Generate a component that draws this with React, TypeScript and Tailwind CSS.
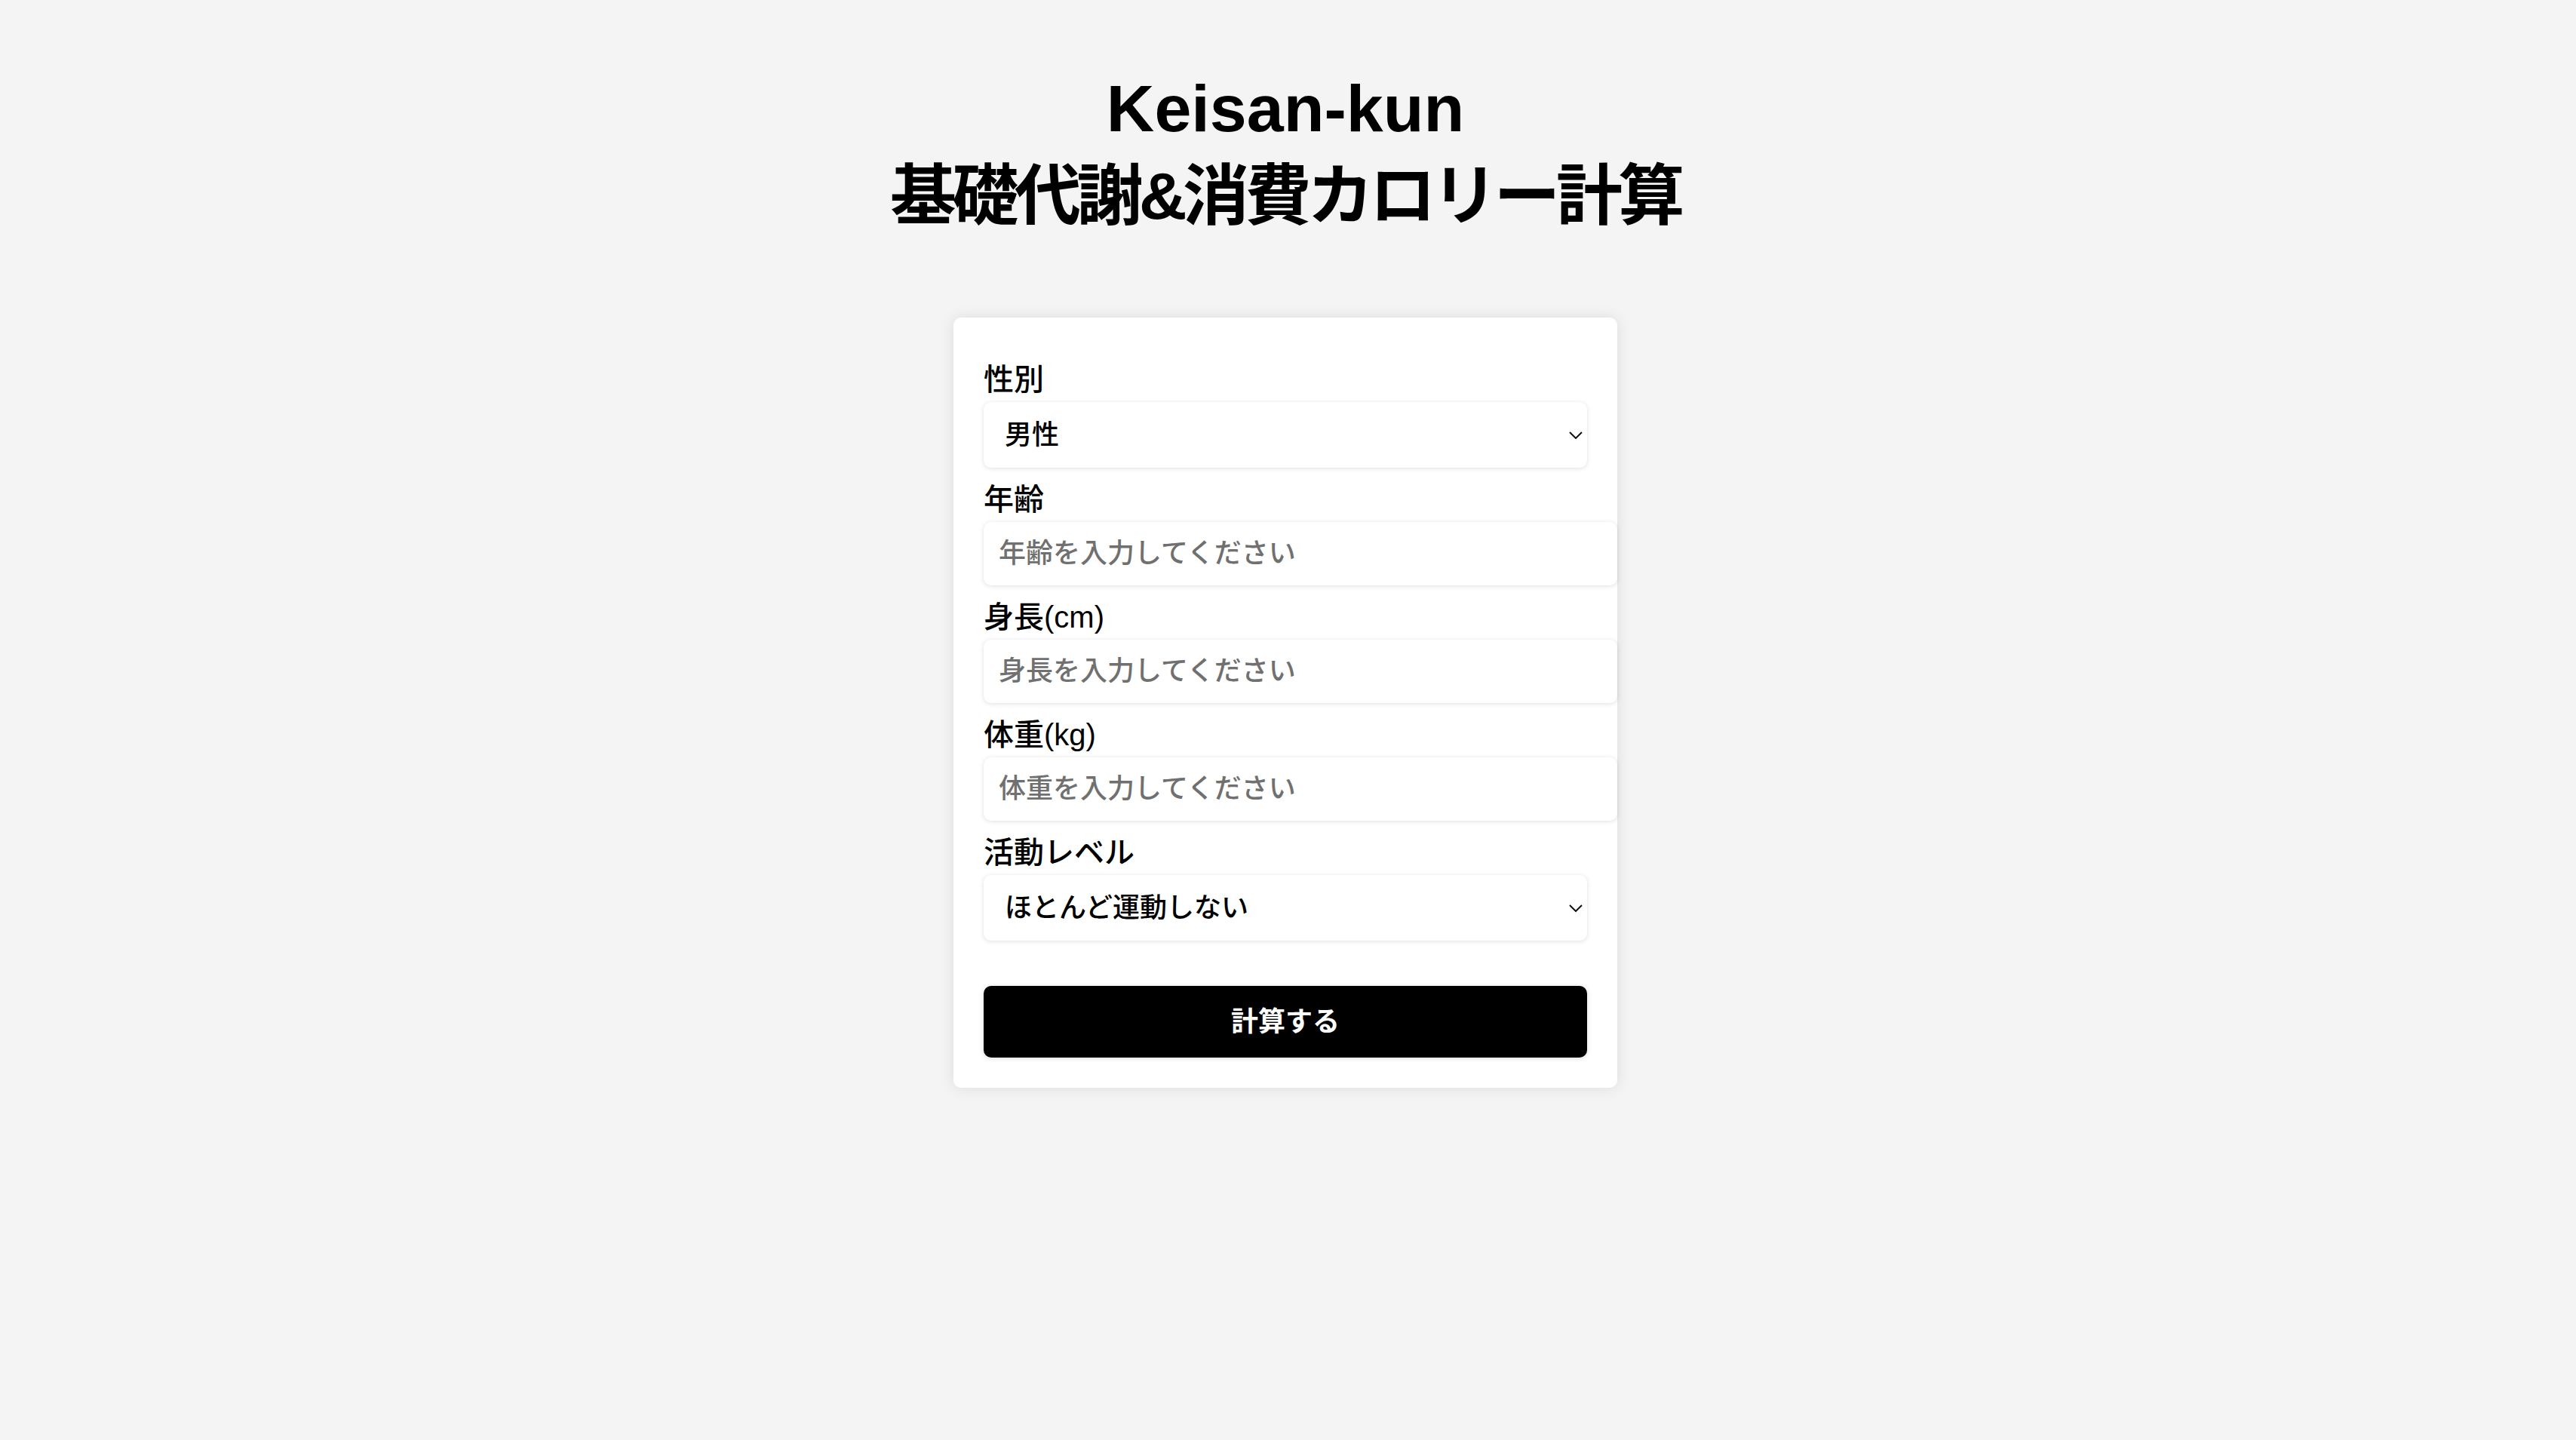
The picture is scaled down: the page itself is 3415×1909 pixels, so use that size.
import React from "react";

const font = "font-['Liberation_Sans','Noto_Sans_CJK_JP',sans-serif]";

const Chevron = () => (
  <svg
    className="pointer-events-none absolute right-[6px] top-1/2 -translate-y-1/2"
    width="18"
    height="10"
    viewBox="0 0 18 10"
    fill="none"
  >
    <path d="M1 1l8 8 8-8" stroke="#111" strokeWidth="2" />
  </svg>
);

const Label = ({ children }: { children: React.ReactNode }) => (
  <label className="block text-[40px] font-medium leading-[60px] text-black">{children}</label>
);

const SelectField = ({ label, options }: { label: string; options: string[] }) => (
  <div className="flex flex-col">
    <Label>{label}</Label>
    <div className="relative w-full">
      <select
        className={`${font} h-[87px] w-full appearance-none rounded-[10px] bg-white pl-[28px] text-[36px] font-medium text-black shadow-[0_1px_6px_rgba(0,0,0,0.13)] outline-none`}
      >
        {options.map((o) => (
          <option key={o}>{o}</option>
        ))}
      </select>
      <Chevron />
    </div>
  </div>
);

const InputField = ({ label, placeholder }: { label: string; placeholder: string }) => (
  <div className="flex flex-col">
    <Label>{label}</Label>
    <input
      type="number"
      placeholder={placeholder}
      className={`${font} h-[84px] w-[840px] rounded-[10px] bg-white px-[20px] text-[36px] font-medium text-black shadow-[0_1px_6px_rgba(0,0,0,0.13)] outline-none placeholder:text-[#707070]`}
    />
  </div>
);

export default function App() {
  return (
    <div className={`${font} flex min-h-screen flex-col items-center bg-[#f4f4f4] pr-[7px] pt-[86px] text-black`}>
      <h1 className="mb-[103px] text-center text-[88px] font-bold leading-[116px]">
        Keisan-kun
        <br />
        <span className="tracking-[-5.5px]">基礎代謝&amp;消費カロリー計算</span>
      </h1>

      <div className="w-[880px] rounded-[10px] bg-white px-[40px] pb-[40px] pt-[52px] shadow-[0_0_20px_rgba(0,0,0,0.1)]">
        <form className="flex flex-col gap-[12px]" onSubmit={(e) => e.preventDefault()}>
          <SelectField label="性別" options={["男性", "女性"]} />
          <InputField label="年齢" placeholder="年齢を入力してください" />
          <InputField label="身長(cm)" placeholder="身長を入力してください" />
          <InputField label="体重(kg)" placeholder="体重を入力してください" />
          <SelectField
            label="活動レベル"
            options={["ほとんど運動しない", "軽い運動", "中程度の運動", "激しい運動", "非常に激しい運動"]}
          />
          <button
            type="submit"
            className="mt-[48px] h-[95px] w-full rounded-[10px] bg-black text-[36px] font-bold text-white shadow-[0_1px_6px_rgba(0,0,0,0.15)]"
          >
            計算する
          </button>
        </form>
      </div>
    </div>
  );
}
